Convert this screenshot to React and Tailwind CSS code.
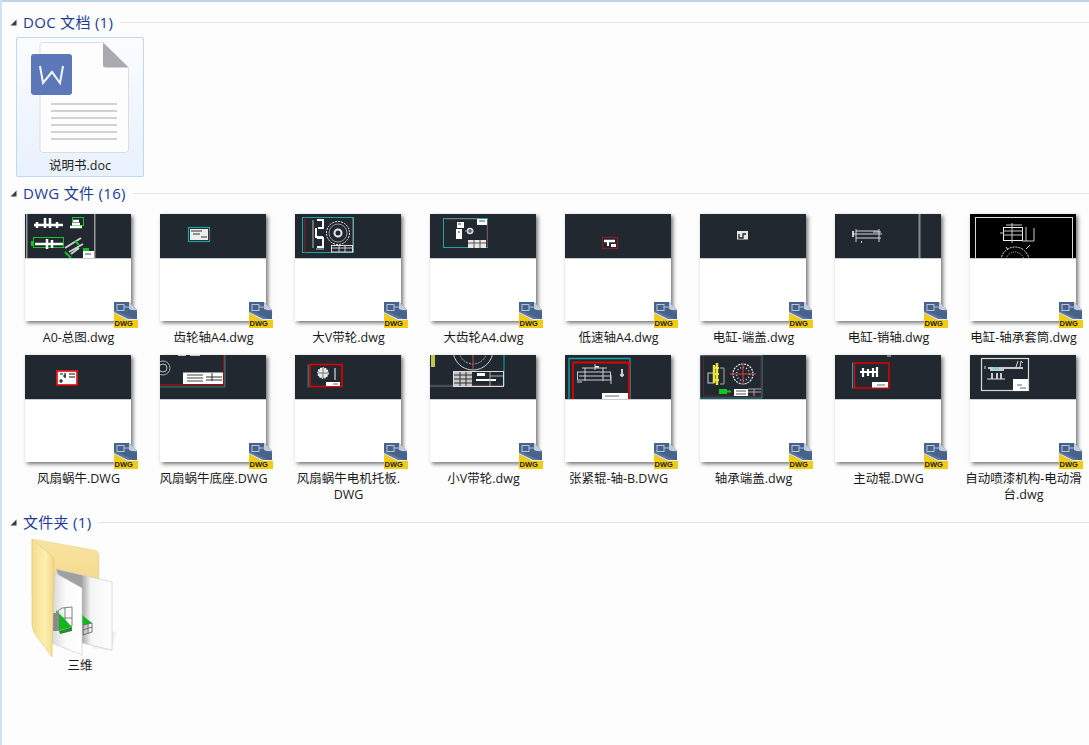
import React from 'react';

const R = ({ x, y, w, h, c = '#fff', s, sw = 1 }) => (
  <rect x={x} y={y} width={w} height={h} fill={s ? 'none' : c} stroke={s} strokeWidth={s ? sw : undefined} />
);
const C = ({ x, y, r, s = '#e8e8e8', sw = 1, f = 'none', d }) => (
  <circle cx={x} cy={y} r={r} fill={f} stroke={s} strokeWidth={sw} strokeDasharray={d} />
);
const P = ({ d, s = '#fff', sw = 1 }) => <path d={d} fill="none" stroke={s} strokeWidth={sw} />;

const TEAL = '#1aa6a6';
const RED = '#e00000';
const DARKRED = '#8c1c24';
const GREEN = '#10c820';

const drawings = [
  <>
    <R x={1} y={0} w={1.5} h={44} c="#9a9a9a" />
    <R x={69} y={0} w={1.5} h={44} c="#9a9a9a" />
    <P d="M9 11h29M12 8v6M20 4v10M25 4v10M32 8v6" sw={2.5} />
    <R x={47.5} y={3.5} w={11} h={8} s={GREEN} />
    <P d="M45 13h12M48 7h6M47 10h8" sw={2.5} />
    <R x={8.5} y={23.5} w={30} h={10} s={GREEN} />
    <R x={6} y={27} w={3} h={5} c={GREEN} />
    <P d="M10 30h28M22 25v10M27 26v8" sw={2.5} />
    <P d="M40 34l16-10M44 38l14-8M46 40l8-6" s="#d0d0d0" sw={2} />
    <P d="M40 38l6 6M50 27l4 4" s={GREEN} sw={2} />
    <R x={58} y={34} w={6} h={3} c={GREEN} />
    <R x={58} y={37} w={11} h={7} />
    <P d="M60 40h6" s="#555" />
  </>,
  <>
    <R x={28.5} y={13.5} w={21} h={14} s={TEAL} sw={1.2} />
    <R x={30} y={15} w={18} h={11} c="#ececec" />
    <P d="M31 17h11M33 20h7M41 23h6" s="#333" />
    <P d="M49 17v9" s={DARKRED} />
  </>,
  <>
    <R x={7.5} y={3.5} w={51} h={35} s={TEAL} />
    <P d="M10 3.5v35" s={DARKRED} />
    <P d="M58 4v34" s="#999" />
    <P d="M22 6h6v8h-5M21 14v9h7M22 24h6v9h-6" sw={2} />
    <P d="M18 6v28M21 35h8" s="#bbb" />
    <C x={43} y={19} r={11.5} d="2 1" />
    <C x={43} y={19} r={9} s="#999" />
    <C x={43} y={19} r={3.5} sw={2} />
    <R x={36.5} y={31.5} w={21} h={6.5} s="#ddd" />
    <P d="M37 34h20M44 32v6M50 32v6" s="#ccc" />
  </>,
  <>
    <R x={13.5} y={4.5} w={44} h={29} s={TEAL} />
    <P d="M16 5.5h41v27" s={DARKRED} />
    <R x={47} y={5} w={10} h={6} />
    <P d="M49 7h6" s="#555" />
    <R x={27} y={8} w={7} h={6} />
    <R x={26} y={15} w={6} h={10} />
    <P d="M28 10h3M28 18h2" s="#333" />
    <C x={40} y={17} r={2.5} sw={1.5} />
    <P d="M35 17h9" s="#aaa" />
    <R x={38} y={26} w={18} h={8} c="#e8e8e8" />
    <P d="M38 29h18M44 26v8M50 26v8" s="#555" />
  </>,
  <>
    <R x={37.5} y={23.5} w={15} h={11} s={DARKRED} sw={1.2} />
    <P d="M39 27h11" sw={2.5} />
    <P d="M43 28v4" sw={2} />
    <R x={46} y={30} w={5} h={3} />
  </>,
  <>
    <R x={37} y={17} w={11} h={8.5} c="#e6e6e6" />
    <P d="M39 20v4h4v-4h3" s="#222" sw={1.3} />
  </>,
  <>
    <P d="M18 20h29M21 15v13M21 17h23M21 24h25M44 15v13M38 18h8" s="#d8d8d8" />
    <P d="M18 17v6M26 28h1" s="#fff" sw={1.5} />
    <R x={83.5} y={0} w={2} h={44} c="#8b8f94" />
  </>,
  <>
    <R x={5.5} y={3.5} w={97} h={50} s="#d8d8d8" sw={1} />
    <R x={33.5} y={13.5} w={19} h={13} s="#f0f0f0" />
    <P d="M36 11h16M33 17h20M33 21h20M42 9v20M56 13v14M30 19h4M52 27h12M64 14v13" s="#ccc" />
    <C x={45} y={47} r={14} d="2 1" />
    <C x={45} y={47} r={9} s="#ccc" d="1 1" />
    <P d="M36 33l2 3M56 35l4-4" s="#ddd" />
  </>,
  <>
    <R x={31.5} y={15.5} w={21} h={14.5} c="#fff" />
    <R x={32} y={16} w={20} h={14} s={RED} sw={1.6} />
    <P d="M35 19h3M38 21h3M40 18v5M44 19h6M44 22h6M34 26h4M36 24v4" s="#111" sw={1.2} />
    <R x={41} y={25} w={10} h={2.5} />
  </>,
  <>
    <P d="M0 30h64V0" s={RED} sw={1.2} />
    <P d="M0 32h65V0" s={TEAL} sw={0.8} />
    <C x={3} y={13} r={7} s="#aaa" />
    <C x={3} y={13} r={4} s="#bbb" />
    <P d="M18 0h8M30 0h10" sw={1.5} />
    <R x={23} y={17.5} w={40} h={11.5} />
    <P d="M27 20h16M27 23h16M27 26h16" s="#444" />
    <P d="M46 22h16M46 25h16M52 18v8" s="#333" />
  </>,
  <>
    <R x={12.5} y={9.5} w={2} h={23} c="#2f6f6f" />
    <R x={15} y={9.5} w={32} h={22} s={RED} sw={1.6} />
    <C x={28} y={18} r={5} f="#e8e8e8" s="#fff" d="1.5 1" sw={1.5} />
    <P d="M28 13v10M23 18h10" s="#777" />
    <P d="M40 13v12" sw={1} />
    <R x={31} y={27} w={14} h={4} />
    <P d="M38 29h5" s="#666" />
  </>,
  <>
    <P d="M0 31h74V0" s={TEAL} sw={1} />
    <P d="M0 30h73" s={DARKRED} sw={0.7} />
    <C x={43} y={-5} r={20} s="#ccc" />
    <C x={43} y={-5} r={14} s="#aaa" d="2 1" />
    <P d="M43 0v15" s="#b05050" />
    <R x={1} y={0} w={4} h={12} c="#c4c454" />
    <R x={23.5} y={16.5} w={50} h={15} s="#ddd" />
    <R x={24} y={17} w={18} h={14} c="#c8c8c8" />
    <P d="M24 20h18M24 24h18M24 28h18M30 17v14M36 17v14" s="#333" />
    <R x={47} y={18} w={8} h={3} />
    <R x={46} y={24} w={20} h={2} />
    <P d="M60 17v14M60 21h13" s="#aaa" />
  </>,
  <>
    <P d="M4 44V3.5h61V44" s={TEAL} sw={1.3} />
    <P d="M8 44V7.5h56V44" s={RED} sw={1.8} />
    <R x={12.5} y={17} w={33} h={8} s="#ccc" />
    <P d="M17 13h25M20 13v13M38 13v13M14 21h32M30 9v6M12 27h5M46 20v9" s="#d0d0d0" />
    <R x={30} y={11} w={4} h={1.5} />
    <C x={57} y={20} r={1.5} s="#ddd" />
    <P d="M57 14v7" s="#ccc" sw={2} />
    <R x={37} y={38} w={26} h={6} />
    <P d="M40 41h14" s="#666" />
  </>,
  <>
    <R x={0} y={0.5} w={62} h={42.5} s={TEAL} sw={0.8} />
    <R x={3.5} y={1} w={57.5} h={40} s={DARKRED} sw={0.8} />
    <R x={8} y={18} w={6} h={10} s="#ccc" />
    <P d="M14 10v18M17 8v22" s="#e8e840" sw={2.5} />
    <P d="M13 13h6M13 19h6M13 25h6" s="#e8e840" sw={2} />
    <P d="M20 13h4v16h-4" s="#aaa" />
    <C x={43} y={19} r={10} d="2 1" sw={1.2} />
    <C x={43} y={19} r={6.5} s="#ccc" d="1 2" sw={1.5} />
    <P d="M30 19h26M43 8v22" s="#d84040" />
    <R x={19} y={34} w={8} h={5} c={GREEN} />
    <R x={27} y={35.5} w={4} h={2} c={GREEN} />
    <R x={34} y={34} w={14} h={7} />
    <P d="M36 36h10M36 39h10" s="#555" />
    <P d="M48 34h13M48 37h13M54 34v7" s="#aaa" />
  </>,
  <>
    <R x={17} y={7.5} w={1.2} h={26} c={TEAL} />
    <R x={19.5} y={8} w={34.5} h={25} s={RED} sw={1.5} />
    <P d="M25 17h18M28 13v9M33 14v7M38 13v9M42 12v10" sw={2.2} />
    <R x={37} y={27} w={16} h={5.5} />
    <P d="M42 30h8" s="#666" />
    <P d="M52 1h4" s="#ccc" />
  </>,
  <>
    <R x={11.5} y={3.5} w={47} h={32} s="#d8d8d8" sw={1.2} />
    <P d="M18 13h35M20 15h14M22 18v6M27 18v6M31 18v6" sw={1.5} />
    <R x={23} y={12} w={6} h={3} c="#7fd8d8" />
    <P d="M46 12l2-6M50 12l1-6l2 2M17 24h18M15 11v3" s="#ddd" />
    <R x={43} y={24} w={15} h={12} />
    <P d="M47 30h5M50 33h6" s="#666" />
  </>,
];

const files = [
  'A0-总图.dwg', '齿轮轴A4.dwg', '大V带轮.dwg', '大齿轮A4.dwg', '低速轴A4.dwg', '电缸-端盖.dwg', '电缸-销轴.dwg', '电缸-轴承套筒.dwg',
  '风扇蜗牛.DWG', '风扇蜗牛底座.DWG', '风扇蜗牛电机托板.\nDWG', '小V带轮.dwg', '张紧辊-轴-B.DWG', '轴承端盖.dwg', '主动辊.DWG', '自动喷漆机构-电动滑\n台.dwg',
];

const DwgBadge = () => (
  <svg width="24" height="26" viewBox="0 0 24 26" className="absolute left-[89px] top-[88px]">
    <path d="M0 0h15l8 8v17H0z" fill="#5d7598" />
    <path d="M15 0l8 8h-8z" fill="#c5cedc" />
    <path d="M0 0h15v7l8 3v8L0 8z" fill="#47638c" />
    <rect x="3" y="2.5" width="7" height="6" fill="none" stroke="#b8c6da" strokeWidth="1" />
    <path d="M10 5h8" stroke="#b8c6da" strokeWidth="1" />
    <path d="M0 11l13 7h11v8H0z" fill="#f2cb12" />
    <path d="M0 10l14 7h10v1H13L0 11z" fill="#e8edf2" />
    <text x="0.5" y="23.5" fontSize="7.5" fontWeight="700" fill="#1c1c1c" fontFamily="Liberation Sans, sans-serif">DWG</text>
  </svg>
);

const Thumb = ({ name, index }) => (
  <div className="w-[135px] h-[141px] flex flex-col items-center">
    <div className="relative w-[106px] h-[107px] shrink-0 bg-white shadow-[2px_2px_4px_rgba(0,0,0,0.55)]">
      <div className={`h-[44px] ${index === 7 ? 'bg-black' : 'bg-[#212830]'}`}>
        <svg width="106" height="44" viewBox="0 0 106 44" className="block">{drawings[index]}</svg>
      </div>
      <div className="h-[1px] bg-[#c8ccd0]" />
      <DwgBadge />
    </div>
    <div className="mt-[9px] ml-[2px] w-[130px] text-center text-[12.5px] leading-[16px] text-[#1a1a1a] whitespace-pre-line">{name}</div>
  </div>
);

const GroupHeader = ({ title }) => (
  <div className="h-[20px] flex items-center">
    <svg width="7" height="7" viewBox="0 0 7 7" className="ml-[8px] shrink-0 mt-[1px]">
      <path d="M0.5 6.5h6v-6z" fill="#3c3c3c" />
    </svg>
    <span className="ml-[6px] text-[15px] leading-[20px] tracking-[0.3px] text-[#1e3a96] whitespace-nowrap">{title}</span>
    <div className="ml-[7px] flex-1 h-[1px] bg-[#e2e4e8]" />
  </div>
);

const DocIcon = () => (
  <svg width="100" height="112" viewBox="0 0 100 112" className="block ml-[14px] mt-[4px]">
    <path d="M12 0.5h60l25.5 25v82a3 3 0 0 1-3 3H12a3 3 0 0 1-3-3V3.5a3 3 0 0 1 3-3z" fill="#fdfdfe" stroke="#dcdde0" />
    <path d="M72 0.5l25.5 25h-23a2.5 2.5 0 0 1-2.5-2.5z" fill="#a9a9af" />
    {[61, 68, 75, 82, 89, 96].map((y) => (
      <rect key={y} x="20" y={y} width="66" height="2" fill="#d2d2d2" />
    ))}
    <rect x="0" y="12" width="41" height="41" rx="3" fill="#5d78b8" />
    <path d="M9 24l3 17 9-11 8 11 3-17" fill="none" stroke="#f4f6fb" strokeWidth="2" />
  </svg>
);

const FolderIcon = () => (
  <svg width="100" height="122" viewBox="0 0 100 122" className="block ml-[28px] mt-[4px]">
    <defs>
      <linearGradient id="back" x1="0" y1="0" x2="0" y2="1">
        <stop offset="0" stopColor="#f8e3a0" />
        <stop offset="1" stopColor="#efcf78" />
      </linearGradient>
      <linearGradient id="flap" x1="0" y1="0" x2="1" y2="0">
        <stop offset="0" stopColor="#f6dc8e" />
        <stop offset="0.6" stopColor="#fdf0ae" />
        <stop offset="1" stopColor="#f2d588" />
      </linearGradient>
      <linearGradient id="page1" x1="0" y1="0" x2="1" y2="0">
        <stop offset="0" stopColor="#d8d8d8" />
        <stop offset="0.45" stopColor="#fafafa" />
        <stop offset="1" stopColor="#ffffff" />
      </linearGradient>
      <linearGradient id="shade" x1="0" y1="0" x2="1" y2="0">
        <stop offset="0.45" stopColor="#a0a0a0" />
        <stop offset="0.62" stopColor="#f4f4f4" />
        <stop offset="1" stopColor="#ffffff" />
      </linearGradient>
    </defs>
    <path d="M2 3l62 11q5 1 5 5v24L52 100 2 60z" fill="url(#back)" stroke="#e6d092" strokeWidth="0.5" />
    <path d="M82 95l4 1-4 19-20-3z" fill="#e8e8e8" opacity="0.6" />
    <path d="M26 33l56 13v68l-30-7z" fill="url(#shade)" stroke="#cfcfcf" strokeWidth="0.7" />
    <path d="M52 79l10 8-10 2z" fill="#12b81e" />
    <path d="M53 89l9-2v9l-9 3zM53 94l9-3M58 88v9" fill="none" stroke="#5c5c5c" strokeWidth="0.8" />
    <path d="M25 37l27 15v67l-30-12z" fill="url(#page1)" stroke="#cfcfcf" strokeWidth="0.7" />
    <path d="M32 72l10-1v19h-14V75zM35 72v18M28 82h14" fill="none" stroke="#666" strokeWidth="0.8" />
    <path d="M26 74l16 17-14 4z" fill="#12b81e" />
    <path d="M29 95l13-4v4l-12 3z" fill="#2b8a2e" />
    <rect x="23" y="77" width="6" height="18" fill="#8a8a8a" />
    <path d="M2 3l21 18q1 1 1 3l-2 97L5 98q-3-5-3-10z" fill="url(#flap)" stroke="#e0c880" strokeWidth="0.6" />
  </svg>
);

export default function App() {
  return (
    <div className="h-[745px] overflow-hidden bg-[#fdfdfd] border-l-[2px] border-l-[#cfe2f6] [font-family:'Open_Sans','Noto_Sans_CJK_SC',sans-serif]">
      <div className="h-[2px] bg-[#bcd3ea] -ml-[2px]" />
      <div className="pt-[10px]">
        <GroupHeader title="DOC 文档 (1)" />
        <div className="mt-[5px] ml-[14px] w-[128px] h-[140px] rounded-[2px] border border-[#bcd8f3] bg-gradient-to-b from-[#fbfcfe] to-[#e8f1fc] relative">
          <DocIcon />
          <div className="absolute left-0 right-0 top-[120px] text-center text-[12.5px] leading-[16px] text-[#1a1a1a]">说明书.doc</div>
        </div>
        <div className="mt-[6px]">
          <GroupHeader title="DWG 文件 (16)" />
        </div>
        <div className="mt-[11px] ml-[8px] grid grid-cols-[repeat(8,135px)]">
          {files.map((name, i) => (
            <Thumb key={name} name={name} index={i} />
          ))}
        </div>
        <div className="mt-[16px]">
          <GroupHeader title="文件夹 (1)" />
        </div>
        <div className="w-[150px]">
          <FolderIcon />
          <div className="text-center text-[12.5px] leading-[16px] text-[#1a1a1a] ml-[6px]">三维</div>
        </div>
      </div>
    </div>
  );
}
